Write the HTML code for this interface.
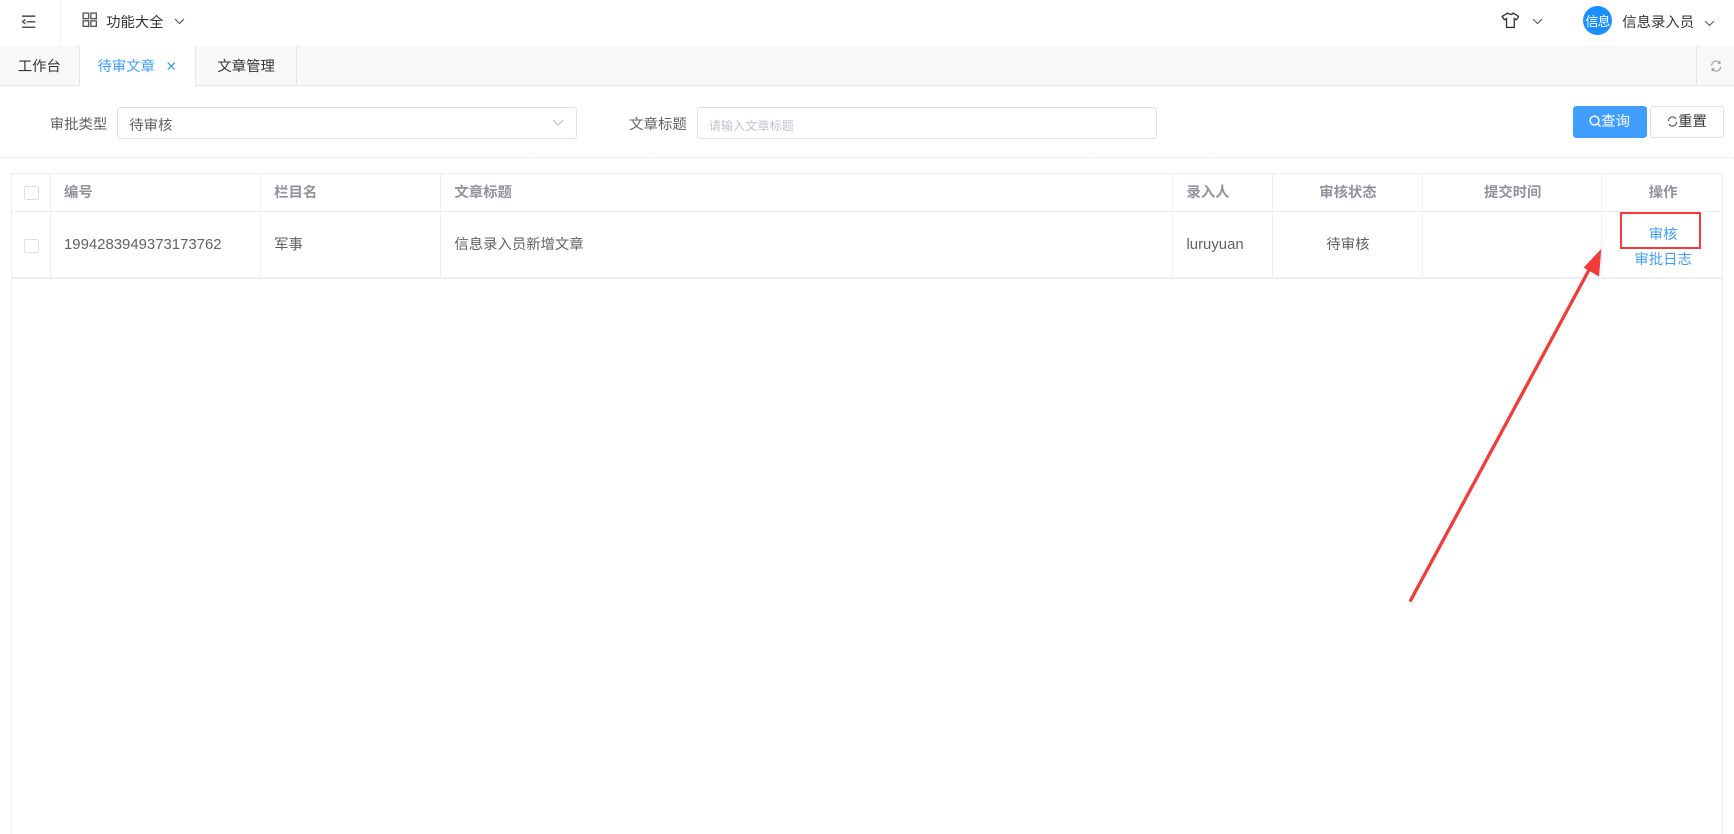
<!DOCTYPE html>
<html><head><meta charset="utf-8">
<style>
*{box-sizing:border-box;margin:0;padding:0}
html,body{width:1734px;height:834px;overflow:hidden;background:#fff}
#w{width:1568px;height:754px;position:relative;zoom:1.10587;font-family:"Liberation Sans","Noto Sans CJK SC",sans-serif;font-size:13px;color:#333}
.a{position:absolute}
.hdr{left:0;top:0;width:1568px;height:42px;background:#fff}
.tabs{left:0;top:42px;width:1568px;height:36px;background:#f8f8f8;border-bottom:1px solid #e6e6e6}
.tab{position:absolute;top:0;height:36px;line-height:38px;text-align:center;border-right:1px solid #e6e6e6;font-size:13px}
.inp{border:1px solid #dcdfe6;border-radius:3px;height:29px;line-height:29px;padding-left:10px;background:#fff}
.tb{left:10px;top:156px;width:1548px;height:600px;border:1px solid #ebeef5;border-bottom:none}
.col{position:absolute;top:0;height:95px;border-right:1px solid #ebeef5}
.th{position:absolute;top:0;height:35px;line-height:35px;color:#909399;font-weight:bold;font-size:13px}
.td{position:absolute;top:35px;height:60px;line-height:60px;color:#606266;font-size:13px}
.cb{position:absolute;width:13px;height:13px;border:1px solid #dcdfe6;border-radius:2px;background:#fff;left:11px}
</style></head><body><div id="w">
<div class="a hdr">
  <div class="a" style="left:54px;top:0;width:1px;height:42px;background:#eee"></div>
  <svg class="a" style="left:19px;top:13px" width="14" height="14" viewBox="0 0 14 14"><path d="M1 2h12M5 7h8M1 12h12M4 5L1.5 7L4 9" stroke="#555" stroke-width="1.4" fill="none"/></svg>
  <svg class="a" style="left:74px;top:11px" width="14" height="14" viewBox="0 0 14 14" fill="none" stroke="#555" stroke-width="1.2"><rect x="1" y="1" width="5" height="5"/><rect x="8" y="1" width="5" height="5"/><rect x="1" y="8" width="5" height="5"/><rect x="8" y="8" width="5" height="5"/></svg>
  <div class="a" style="left:96px;top:10px;font-size:13px;color:#333">功能大全</div>
  <svg class="a" style="left:157px;top:16px" width="10" height="7"><path d="M1 1l4 4 4-4" stroke="#555" fill="none"/></svg>
  <svg class="a" style="left:1357px;top:11px" width="17" height="15" viewBox="0 0 17 15"><path d="M6 1L1 4l2 3 2-1v8h7V6l2 1 2-3-5-3c-.5 1.5-3.5 1.5-5 0z" stroke="#333" stroke-width="1.2" fill="none"/></svg>
  <svg class="a" style="left:1385px;top:16px" width="10" height="7"><path d="M1 1l4 4 4-4" stroke="#555" fill="none"/></svg>
  <div class="a" style="left:1431px;top:5px;width:27px;height:27px;border-radius:50%;background:#1890ff;color:#fff;font-size:12px;line-height:29px;text-align:center;letter-spacing:-1px">信息</div>
  <div class="a" style="left:1467px;top:10px;font-size:13px;color:#333">信息录入员</div>
  <svg class="a" style="left:1541px;top:18px" width="10" height="7"><path d="M1 1l4 4 4-4" stroke="#555" fill="none"/></svg>
</div>
<div class="a tabs">
  <div class="tab" style="left:0;width:72px;color:#333">工作台</div>
  <div class="tab" style="left:72px;width:105px;background:#fff;color:#409eff;height:37px">待审文章 <span style="margin-left:6px;font-size:12px">✕</span></div>
  <div class="tab" style="left:177px;width:92px;color:#333">文章管理</div>
  <div class="a" style="left:1534px;top:0;width:1px;height:36px;background:#e6e6e6"></div>
  <svg class="a" style="left:1546px;top:12px" width="11" height="11" viewBox="0 0 11 11" fill="none" stroke="#999" stroke-width="1"><path d="M1.5 5A4 4 0 0 1 9 3M9.5 6A4 4 0 0 1 2 8M9 1v2H7M2 10V8h2"/></svg>
</div>
<div class="a" style="left:45px;top:102px;color:#606266">审批类型</div>
<div class="a inp" style="left:106px;top:97px;width:416px;color:#606266;padding-top:2px">待审核</div>
<svg class="a" style="left:499px;top:108px" width="11" height="7"><path d="M1 1l4.5 4.5L10 1" stroke="#bbb" fill="none"/></svg>
<div class="a" style="left:569px;top:102px;color:#606266">文章标题</div>
<div class="a inp" style="left:630px;top:97px;width:416px;color:#c0c4cc;font-size:11px;padding-top:2px">请输入文章标题</div>
<div class="a" style="left:1422px;top:96px;width:67px;height:29px;background:#409eff;border-radius:3px;color:#fff;line-height:30px;text-align:center;font-size:13px"><svg width="11" height="11" style="vertical-align:-1px" viewBox="0 0 11 11" fill="none" stroke="#fff" stroke-width="1.3"><circle cx="5" cy="5" r="4"/><path d="M8 8l2.5 2.5"/></svg>查询</div>
<div class="a" style="left:1492px;top:96px;width:67px;height:29px;border:1px solid #dcdfe6;border-radius:3px;color:#333;line-height:28px;text-align:center;font-size:13px"><svg width="10" height="10" style="vertical-align:-1px" viewBox="0 0 11 11" fill="none" stroke="#555" stroke-width="1.2"><path d="M1.5 5A4 4 0 0 1 9 3M9.5 6A4 4 0 0 1 2 8"/></svg>重置</div>
<div class="a" style="left:0;top:142px;width:1568px;border-top:1px dashed #e6e6e6"></div>
<div class="a tb">
  <div class="a" style="left:0;top:34px;width:1546px;height:1px;background:#ebeef5"></div>
  <div class="a" style="left:0;top:94px;width:1546px;height:1px;background:#ebeef5"></div>
  <div class="col" style="left:0;width:35px"></div>
  <div class="col" style="left:35px;width:190px"></div>
  <div class="col" style="left:225px;width:163px"></div>
  <div class="col" style="left:388px;width:662px"></div>
  <div class="col" style="left:1050px;width:90px"></div>
  <div class="col" style="left:1140px;width:136px"></div>
  <div class="col" style="left:1276px;width:162px"></div>
  <div class="cb" style="top:11px"></div>
  <div class="cb" style="top:59px"></div>
  <div class="th" style="left:47px">编号</div>
  <div class="th" style="left:237px">栏目名</div>
  <div class="th" style="left:400px">文章标题</div>
  <div class="th" style="left:1062px">录入人</div>
  <div class="th" style="left:1140px;width:136px;text-align:center">审核状态</div>
  <div class="th" style="left:1276px;width:162px;text-align:center">提交时间</div>
  <div class="th" style="left:1438px;width:110px;text-align:center">操作</div>
  <div class="td" style="left:47px;font-size:13.5px">1994283949373173762</div>
  <div class="td" style="left:237px">军事</div>
  <div class="td" style="left:400px">信息录入员新增文章</div>
  <div class="td" style="left:1062px;font-size:13.5px">luruyuan</div>
  <div class="td" style="left:1140px;width:136px;text-align:center">待审核</div>
  <div class="a" style="left:1438px;top:45px;width:110px;text-align:center;color:#409eff;line-height:22px">审核<br>审批日志</div>
</div>
<div class="a" style="left:1465px;top:192px;width:73px;height:33px;border:2px solid #f23c3c"></div>
<svg class="a" style="left:0;top:0" width="1568" height="754"><path d="M1275 544L1438 242" stroke="#f23c3c" stroke-width="3"/><path d="M1448 225L1446 250L1432 242Z" fill="#f23c3c"/></svg>
</div></body></html>
